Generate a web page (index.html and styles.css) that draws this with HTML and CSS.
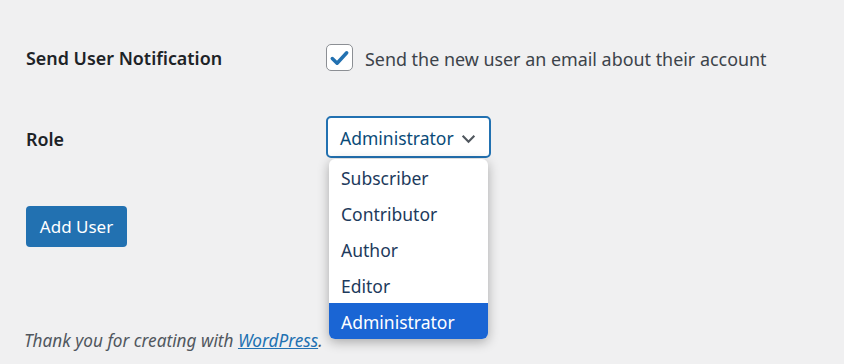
FILE: index.html
```html
<html>

<head>
	<title>Add New User</title>
	<link rel="stylesheet" href="styles.css">
</head>

<body>
	<div class="wrap">
		<form class="form">
			<div class="form__row form__row--notify">
				<div class="form__label">Send User Notification</div>
				<div class="form__field">
					<label class="check">
						<span class="check__box">
							<svg width="26" height="26" viewBox="0 0 26 26">
								<path d="M5.5 13.5l5 5 10-11" fill="none" stroke="#2271b1" stroke-width="3.6" stroke-linecap="round" stroke-linejoin="round" />
							</svg>
						</span>
						<span class="check__text">Send the new user an email about their account</span>
					</label>
				</div>
			</div>
			<div class="form__row form__row--role">
				<div class="form__label">Role</div>
				<div class="form__field">
					<div class="select">
						<div class="select__value">
							Administrator
							<svg class="select__arrow" width="17" height="17" viewBox="0 0 16 16">
								<path d="M2.5 5.5L8 11l5.5-5.5" fill="none" stroke="#50575e" stroke-width="2" />
							</svg>
						</div>
						<ul class="select__menu">
							<li class="select__option">Subscriber</li>
							<li class="select__option">Contributor</li>
							<li class="select__option">Author</li>
							<li class="select__option">Editor</li>
							<li class="select__option select__option--active">Administrator</li>
						</ul>
					</div>
				</div>
			</div>
			<button type="button" class="button">Add User</button>
		</form>
		<p class="footer">Thank you for creating with <a href="#" class="footer__link">WordPress</a>.</p>
	</div>
</body>

</html>
```

FILE: styles.css
```css
* {
	margin: 0;
	padding: 0;
	box-sizing: border-box;
}

body {
	background-color: #f0f0f1;
	font-family: "Noto Sans", "Open Sans", sans-serif;
	font-size: 17.9px;
	color: #3c434a;
}

.wrap {
	padding: 44px 0 0 26px;
}

.form__row {
	display: flex;
	align-items: center;
}

.form__row--role {
	margin-top: 45px;
}

.form__label {
	width: 300px;
	font-weight: 600;
	color: #1d2327;
}

.form__row--role .form__label {
	padding-top: 4px;
}

.check {
	display: flex;
	align-items: center;
	gap: 12px;
}

.check__box {
	width: 27px;
	height: 27px;
	display: flex;
	align-items: center;
	justify-content: center;
	background-color: #fff;
	border: 1px solid #8c8f94;
	border-radius: 5px;
}

.check__text {
	padding-top: 2px;
}

.select {
	position: relative;
	font-size: 17.5px;
}

.select__value {
	width: 165px;
	height: 42px;
	padding: 2px 12px 0 12px;
	display: flex;
	align-items: center;
	justify-content: space-between;
	background-color: #fff;
	border: 2px solid #2271b1;
	border-radius: 5px;
	color: #0a4b78;
}

.select__menu {
	position: absolute;
	top: 43px;
	left: 3px;
	width: 159px;
	list-style: none;
	background-color: #fff;
	border-radius: 6px;
	box-shadow: 0 3px 12px rgba(0, 0, 0, 0.3);
	overflow: hidden;
}

.select__option {
	height: 36px;
	padding: 2px 0 0 12px;
	display: flex;
	align-items: center;
	color: #1d3a5c;
}

.select__option--active {
	background-color: #1a65d4;
	color: #fff;
}

.button {
	margin-top: 48px;
	width: 101px;
	height: 41px;
	background-color: #2271b1;
	color: #fff;
	border: none;
	border-radius: 4px;
	font-family: inherit;
	font-size: 17px;
}

.footer {
	margin-top: 82px;
	margin-left: -2px;
	font-size: 17.2px;
	font-style: italic;
	color: #50575e;
}

.footer__link {
	color: #2271b1;
}
```
